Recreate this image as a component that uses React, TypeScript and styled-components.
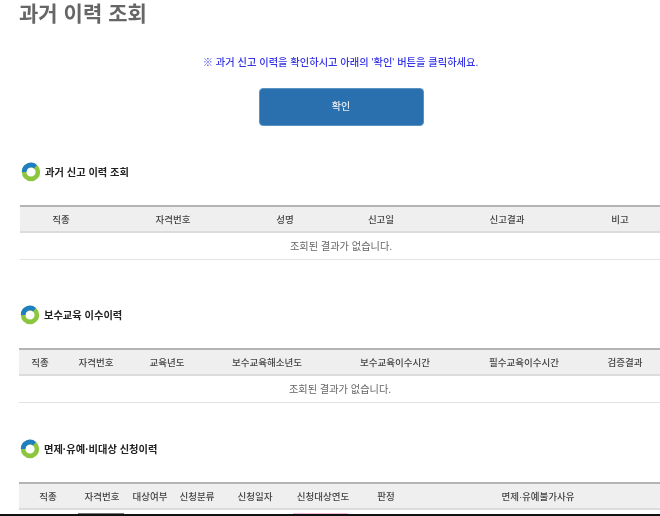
import React from 'react'
import styled, { createGlobalStyle } from 'styled-components'

const GlobalStyle = createGlobalStyle`
  html, body {
    margin: 0;
    padding: 0;
    background: #fff;
    overflow: hidden;
  }
  body {
    font-family: 'Liberation Sans', 'Noto Sans CJK KR', sans-serif;
  }
`

const Page = styled.div`
  position: relative;
  width: 660px;
  height: 516px;
  overflow: hidden;
  background: #fff;
`

/* the reference is a scaled-down capture, so its content is slightly soft */
const Content = styled.div`
  filter: blur(0.35px);
`

const Title = styled.h1`
  margin: 0;
  padding: 1px 0 0 19px;
  height: 25px;
  font-size: 21px;
  line-height: 26px;
  font-weight: 700;
  color: #666;
  letter-spacing: 0.05px;
`

const Notice = styled.p`
  margin: 29px 0 0;
  text-align: center;
  padding-left: 21px;
  font-size: 10.25px;
  line-height: 16px;
  font-weight: 500;
  color: #3434e6;
`

const ButtonRow = styled.div`
  display: flex;
  justify-content: center;
  padding-left: 22px;
  margin-top: 17px;
`

const ConfirmButton = styled.button`
  width: 165px;
  height: 38px;
  border: 1px solid #5b93c4;
  border-radius: 4px;
  background: #2b70ae;
  color: #e8eef5;
  font-family: inherit;
  font-size: 10px;
  font-weight: 500;
  padding: 0 0 4px;
`

const Section = styled.section<{ $top: number; $left: number }>`
  margin-top: ${({ $top }) => $top}px;
  padding-left: ${({ $left }) => $left}px;
`

const Heading = styled.div`
  display: flex;
  align-items: center;
  gap: 4px;
  height: 20px;
  padding-left: 1px;
  font-size: 10.25px;
  font-weight: 700;
  color: #222;
`

const RingIcon = styled.svg`
  margin-top: 2px;
`

const Table = styled.table`
  margin-top: 24px;
  width: 642px;
  border-collapse: collapse;
  table-layout: fixed;
`

const HeadRow = styled.tr`
  background: #efefef;
  border-top: 2px solid #b4b4b4;
  border-bottom: 2px solid #dcdcdc;
`

const HeadCell = styled.th`
  height: 24px;
  padding: 0;
  font-size: 9.5px;
  font-weight: 500;
  color: #444;
  text-align: center;
  white-space: nowrap;
`

const BodyCell = styled.td`
  height: 24px;
  padding: 0 0 2px;
  border-bottom: 1px solid #e2e2e2;
  font-size: 10.2px;
  color: #666;
  text-align: center;
`

const Ring = () => (
  <RingIcon width="20" height="20" viewBox="0 0 20 20">
    <circle cx="10" cy="10" r="6.9" fill="none" stroke="#8cc63f" strokeWidth="4.6" />
    <path d="M3.1 10A6.9 6.9 0 0 1 14.5 4.7" fill="none" stroke="#1f7fc0" strokeWidth="4.6" />
  </RingIcon>
)

type HistoryProps = {
  title: string
  columns: { label: string; width: number }[]
  top: number
  left: number
  empty?: boolean
}

const HistoryTable = ({ title, columns, top, left, empty }: HistoryProps) => (
  <Section $top={top} $left={left}>
    <Heading>
      <Ring />
      {title}
    </Heading>
    <Table>
      <colgroup>
        {columns.map((c) => (
          <col key={c.label} style={{ width: c.width }} />
        ))}
      </colgroup>
      <thead>
        <HeadRow>
          {columns.map((c) => (
            <HeadCell key={c.label}>{c.label}</HeadCell>
          ))}
        </HeadRow>
      </thead>
      {empty && (
        <tbody>
          <tr>
            <BodyCell colSpan={columns.length}>조회된 결과가 없습니다.</BodyCell>
          </tr>
        </tbody>
      )}
    </Table>
  </Section>
)

const reportColumns = [
  { label: '직종', width: 82 },
  { label: '자격번호', width: 142 },
  { label: '성명', width: 82 },
  { label: '신고일', width: 110 },
  { label: '신고결과', width: 142 },
  { label: '비고', width: 84 },
]

const educationColumns = [
  { label: '직종', width: 42 },
  { label: '자격번호', width: 70 },
  { label: '교육년도', width: 72 },
  { label: '보수교육해소년도', width: 128 },
  { label: '보수교육이수시간', width: 128 },
  { label: '필수교육이수시간', width: 130 },
  { label: '검증결과', width: 72 },
]

const exemptColumns = [
  { label: '직종', width: 58 },
  { label: '자격번호', width: 50 },
  { label: '대상여부', width: 46 },
  { label: '신청분류', width: 48 },
  { label: '신청일자', width: 68 },
  { label: '신청대상연도', width: 68 },
  { label: '판정', width: 58 },
  { label: '면제·유예불가사유', width: 246 },
]

// row cut off by the bottom of the capture: only the top edge of two cells shows
const ClippedCell = styled.div<{ $left: number; $width: number; $color: string }>`
  position: absolute;
  left: ${({ $left }) => $left}px;
  width: ${({ $width }) => $width}px;
  bottom: 2px;
  height: 1px;
  background: ${({ $color }) => $color};
`

const BottomEdge = styled.div`
  position: absolute;
  left: 0;
  right: 0;
  bottom: 0;
  height: 2px;
  background: #111;
`

const App = () => (
  <Page>
    <GlobalStyle />
    <Content>
      <Title>과거 이력 조회</Title>
      <Notice>※ 과거 신고 이력을 확인하시고 아래의 '확인' 버튼을 클릭하세요.</Notice>
      <ButtonRow>
        <ConfirmButton>확인</ConfirmButton>
      </ButtonRow>
      <HistoryTable title="과거 신고 이력 조회" columns={reportColumns} top={35} left={20} empty />
      <HistoryTable title="보수교육 이수이력" columns={educationColumns} top={44} left={19} empty />
      <HistoryTable title="면제·유예·비대상 신청이력" columns={exemptColumns} top={35} left={19} />
    </Content>
    <ClippedCell $left={78} $width={46} $color="#777" />
    <ClippedCell $left={293} $width={55} $color="#f6b4dc" />
    <BottomEdge />
  </Page>
)

export default App
